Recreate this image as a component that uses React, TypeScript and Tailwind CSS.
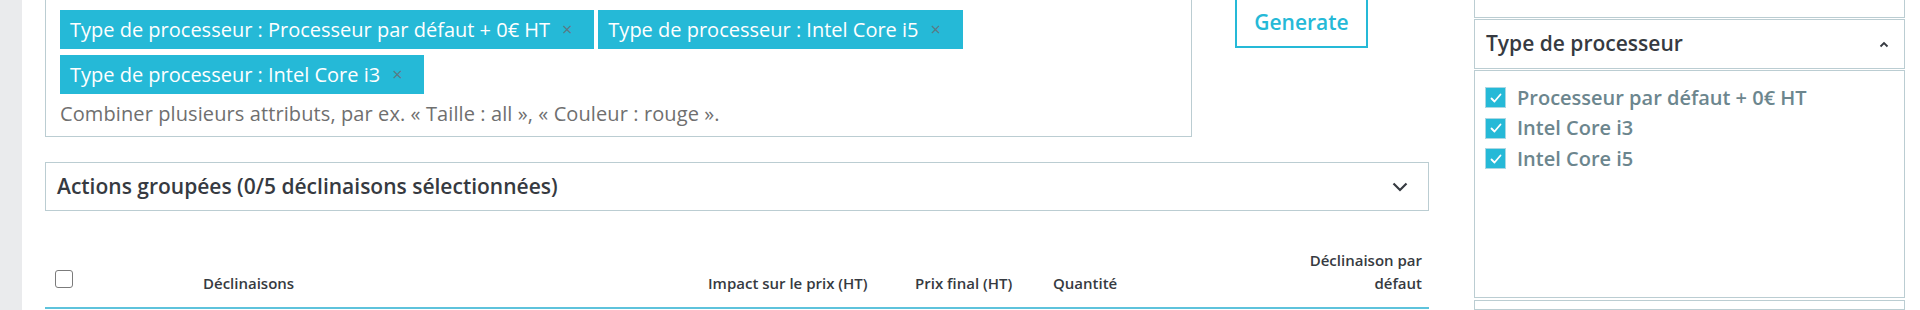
import React from "react";

const Tag = ({ label }: { label: string }) => (
  <span className="inline-flex h-[39px] items-center bg-[#25b9d7] pl-[10px] pr-[22px] text-[20px] text-white">
    <span>{label}</span>
    <span className="ml-[12px] text-[18px] text-[#5b7a85]">×</span>
  </span>
);

const CheckedBox = () => (
  <span className="flex h-[21px] w-[21px] shrink-0 items-center justify-center border border-[#a9d8e4] bg-[#25b9d7]">
    <svg width="14" height="14" viewBox="0 0 14 14" fill="none">
      <path d="M2.5 7.5 L5.5 10.5 L11.5 3.5" stroke="white" strokeWidth="1.8" strokeLinecap="round" strokeLinejoin="round" />
    </svg>
  </span>
);

export default function App() {
  return (
    <div className="flex h-[310px] w-[1920px] overflow-hidden bg-white font-['Open_Sans',sans-serif] text-[#363a41]">
      <div className="w-[22px] shrink-0 bg-[#eaebed]" />
      <div className="w-[23px] shrink-0" />
      <main className="flex w-[1384px] shrink-0 flex-col">
        <div className="-mt-px flex items-start">
          <div className="w-[1147px] shrink-0 border border-[#bbcdd2] pb-[10px] pl-[14px] pr-4 pt-[10px]">
            <div className="flex flex-wrap gap-x-[4px] gap-y-[6px]">
              <Tag label="Type de processeur : Processeur par défaut + 0€ HT" />
              <Tag label="Type de processeur : Intel Core i5" />
              <Tag label="Type de processeur : Intel Core i3" />
            </div>
            <p className="mt-[8px] text-[20px] leading-[24px] tracking-[0.1px] text-[#6f6f6f]">
              Combiner plusieurs attributs, par ex. « Taille : all », « Couleur : rouge ».
            </p>
          </div>
          <button className="-mt-[2px] ml-[43px] h-[51px] w-[133px] border-2 border-[#25b9d7] text-[21px] font-semibold text-[#25b9d7]">
            Generate
          </button>
        </div>
        <div className="mt-[25px] flex h-[49px] items-center justify-between border border-[#bbcdd2] pl-[11px] pr-[20px]">
          <span className="text-[21px] font-semibold">Actions groupées (0/5 déclinaisons sélectionnées)</span>
          <svg width="16" height="10" viewBox="0 0 16 10" fill="none">
            <path d="M1.5 1.5 L8 8 L14.5 1.5" stroke="#363a41" strokeWidth="2.2" />
          </svg>
        </div>
        <div className="flex h-[98px] items-end border-b-2 border-[#5ec3dc] pb-[12px] text-[15px] font-semibold leading-[23px]">
          <div className="w-[148px] pb-[7px] pl-[10px]">
            <span className="block h-[18px] w-[18px] rounded-[3px] border border-[#7b7b7b] bg-white" />
          </div>
          <div className="w-[505px] pl-[10px]">Déclinaisons</div>
          <div className="w-[207px] pl-[10px]">Impact sur le prix (HT)</div>
          <div className="w-[138px] pl-[10px]">Prix final (HT)</div>
          <div className="w-[246px] pl-[10px]">Quantité</div>
          <div className="w-[140px] pr-[7px] text-right">Déclinaison par défaut</div>
        </div>
      </main>
      <div className="w-[45px] shrink-0" />
      <aside className="flex w-[431px] shrink-0 flex-col">
        <div className="h-[18px] border-x border-b border-[#bbcdd2]" />
        <div className="mt-[1px] flex h-[52px] items-center justify-between border border-[#bbcdd2] pl-[11px] pr-[15px]">
          <span className="text-[21px] font-semibold">Type de processeur</span>
          <svg width="10" height="7" viewBox="0 0 10 7" fill="none">
            <path d="M1.5 5.5 L5 2 L8.5 5.5" stroke="#363a41" strokeWidth="1.8" />
          </svg>
        </div>
        <div className="mt-[1px] h-[233px] border border-[#bbcdd2] pl-[10px] pr-[11px] pt-[11px]">
          {["Processeur par défaut + 0€ HT", "Intel Core i3", "Intel Core i5"].map((l) => (
            <div key={l} className="flex h-[30.5px] items-center gap-[11px]">
              <CheckedBox />
              <span className="text-[20px] font-semibold text-[#6c868e]">{l}</span>
            </div>
          ))}
        </div>
        <div className="mt-[2px] h-[10px] border border-[#bbcdd2]" />
      </aside>
    </div>
  );
}
